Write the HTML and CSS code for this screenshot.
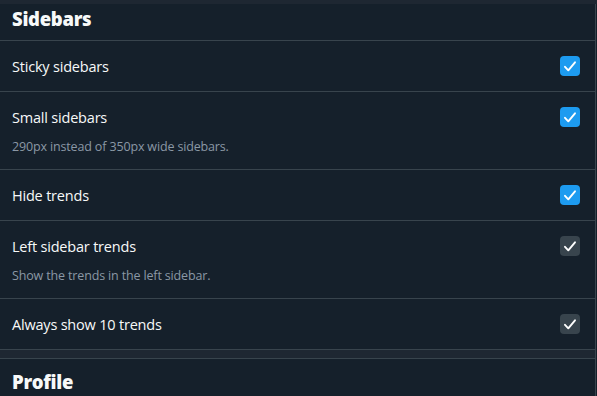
FILE: index.html
```html
<!DOCTYPE html>
<html lang="en">
<head>
    <meta charset="UTF-8">
    <meta name="viewport" content="width=device-width, initial-scale=1.0">
    <title>Settings - Sidebars</title>
    <link rel="stylesheet" href="styles.css">
</head>
<body>
<div class="top-strip"></div>

<div class="settings">
    <h2 class="section-title first">Sidebars</h2>

    <div class="option">
        <div class="option-text">
            <div class="option-label">Sticky sidebars</div>
        </div>
        <span class="checkbox checked">
            <svg viewBox="0 0 20 20" width="20" height="20"><path d="M5 10.8 L8.3 14.3 L15 6.3" fill="none" stroke="#fff" stroke-width="1.9" stroke-linecap="round" stroke-linejoin="round"/></svg>
        </span>
    </div>

    <div class="option">
        <div class="option-text">
            <div class="option-label">Small sidebars</div>
            <div class="option-desc">290px instead of 350px wide sidebars.</div>
        </div>
        <span class="checkbox checked">
            <svg viewBox="0 0 20 20" width="20" height="20"><path d="M5 10.8 L8.3 14.3 L15 6.3" fill="none" stroke="#fff" stroke-width="1.9" stroke-linecap="round" stroke-linejoin="round"/></svg>
        </span>
    </div>

    <div class="option">
        <div class="option-text">
            <div class="option-label">Hide trends</div>
        </div>
        <span class="checkbox checked">
            <svg viewBox="0 0 20 20" width="20" height="20"><path d="M5 10.8 L8.3 14.3 L15 6.3" fill="none" stroke="#fff" stroke-width="1.9" stroke-linecap="round" stroke-linejoin="round"/></svg>
        </span>
    </div>

    <div class="option">
        <div class="option-text">
            <div class="option-label">Left sidebar trends</div>
            <div class="option-desc">Show the trends in the left sidebar.</div>
        </div>
        <span class="checkbox disabled">
            <svg viewBox="0 0 20 20" width="20" height="20"><path d="M5 10.8 L8.3 14.3 L15 6.3" fill="none" stroke="#fff" stroke-width="1.9" stroke-linecap="round" stroke-linejoin="round"/></svg>
        </span>
    </div>

    <div class="option">
        <div class="option-text">
            <div class="option-label">Always show 10 trends</div>
        </div>
        <span class="checkbox disabled">
            <svg viewBox="0 0 20 20" width="20" height="20"><path d="M5 10.8 L8.3 14.3 L15 6.3" fill="none" stroke="#fff" stroke-width="1.9" stroke-linecap="round" stroke-linejoin="round"/></svg>
        </span>
    </div>

    <!-- gap between sections -->
    <div class="section-gap"></div>

    <h2 class="section-title">Profile</h2>
</div>
</body>
</html>
```

FILE: styles.css
```css
body {
    font-family: "Open Sans", "Noto Sans", Arial, sans-serif;
    margin: 0;
    padding: 0;
    background-color: #15202b;
    color: #f7f9f9;
    overflow: hidden;
}

.top-strip {
    height: 4px;
    background-color: #1e2732;
}

.settings {
    width: 595px;
    border-right: 1px solid #38444d;
    min-height: 400px;
}

.section-title {
    margin: 0;
    padding: 11px 12px 9px;
    font-size: 18.5px;
    line-height: 24px;
    font-weight: 800;
    letter-spacing: -0.3px;
    border-bottom: 1px solid #38444d;
}

.section-title.first {
    padding-top: 3px;
}

.option {
    display: flex;
    justify-content: space-between;
    align-items: flex-start;
    padding: 16px 15px 14px 12px;
    border-bottom: 1px solid #38444d;
}

.option-label {
    font-size: 14.5px;
    line-height: 20px;
    letter-spacing: -0.2px;
}

.option-desc {
    margin-top: 10px;
    font-size: 12.5px;
    line-height: 17px;
    color: #8b98a5;
    letter-spacing: -0.15px;
}

.checkbox {
    width: 20px;
    height: 20px;
    border-radius: 4px;
    display: block;
    flex-shrink: 0;
    margin-top: -1px;
}

.checkbox svg {
    display: block;
}

.checked {
    background-color: #1d9bf0;
}

.disabled {
    background-color: #38444d;
}

.section-gap {
    height: 8px;
    background-color: #1e2732;
    border-bottom: 1px solid #38444d;
}
```
